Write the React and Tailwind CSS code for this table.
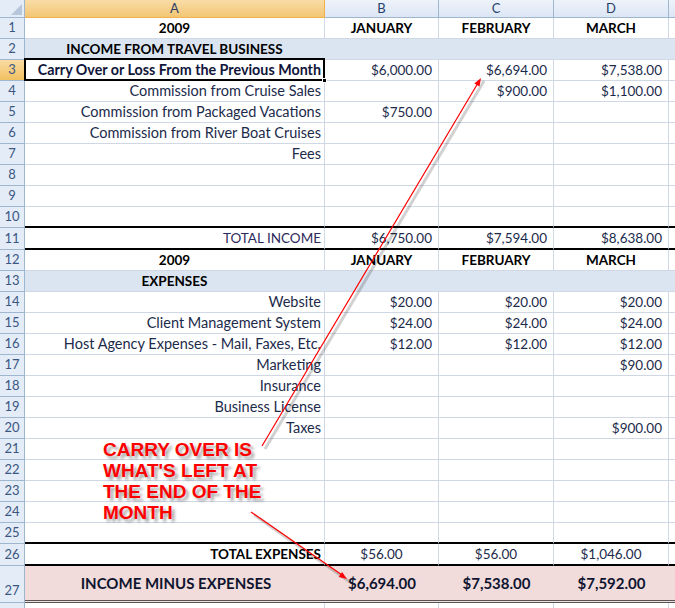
import React from 'react';

const font = { fontFamily: 'Lato, "Open Sans", sans-serif' };

const rows = [
  { n: 1, a: '2009', aCls: 'font-bold justify-center text-black', v: ['JANUARY', 'FEBRUARY', 'MARCH'], vCls: 'font-bold justify-center text-black' },
  { n: 2, a: 'INCOME FROM TRAVEL BUSINESS', aCls: 'font-bold justify-center text-black', bg: 'blue' },
  { n: 3, a: 'Carry Over or Loss From the Previous Month', aCls: 'font-bold justify-end pr-[3px] text-[14.3px] text-[#10153a]', v: ['$6,000.00', '$6,694.00', '$7,538.00'], sel: true },
  { n: 4, a: 'Commission from Cruise Sales', v: ['', '$900.00', '$1,100.00'] },
  { n: 5, a: 'Commission from Packaged Vacations', v: ['$750.00', '', ''] },
  { n: 6, a: 'Commission from River Boat Cruises' },
  { n: 7, a: 'Fees' },
  { n: 8 },
  { n: 9 },
  { n: 10, thick: true },
  { n: 11, a: 'TOTAL INCOME', aCls: 'justify-end pr-[3px] text-[#2d2a5c]', v: ['$6,750.00', '$7,594.00', '$8,638.00'], thick: true, tall: true },
  { n: 12, a: '2009', aCls: 'font-bold justify-center text-black', v: ['JANUARY', 'FEBRUARY', 'MARCH'], vCls: 'font-bold justify-center text-black' },
  { n: 13, a: 'EXPENSES', aCls: 'font-bold justify-center text-black', bg: 'blue' },
  { n: 14, a: 'Website', v: ['$20.00', '$20.00', '$20.00'] },
  { n: 15, a: 'Client Management System', v: ['$24.00', '$24.00', '$24.00'] },
  { n: 16, a: 'Host Agency Expenses - Mail, Faxes, Etc.', v: ['$12.00', '$12.00', '$12.00'] },
  { n: 17, a: 'Marketing', v: ['', '', '$90.00'] },
  { n: 18, a: 'Insurance' },
  { n: 19, a: 'Business License' },
  { n: 20, a: 'Taxes', v: ['', '', '$900.00'] },
  { n: 21 },
  { n: 22 },
  { n: 23 },
  { n: 24 },
  { n: 25, thick: true },
  { n: 26, a: 'TOTAL EXPENSES', aCls: 'font-bold justify-end pr-[3px] text-black', v: ['$56.00', '$56.00', '$1,046.00'], vCls: 'justify-center text-[#1c2b4b]', thick: true, tall: true },
];

const widths = ['w-[300px]', 'w-[114px]', 'w-[115px]', 'w-[115px]'];

function RowHead({ n, sel, h }) {
  return (
    <div
      className={`w-[25px] shrink-0 border-r border-b border-[#9eb6ce] flex justify-center text-[13px] text-[#3a5683] ${h} ${h === 'h-[37px]' ? 'items-end pb-[2px]' : 'items-center'} ${sel ? 'bg-gradient-to-b from-[#f9dba3] to-[#f1c15f]' : 'bg-[#e4ecf7]'}`}
    >
      {n}
    </div>
  );
}

function Row({ r }) {
  const h = r.tall ? 'h-[22px]' : 'h-[21px]';
  const bottom = r.thick ? 'border-b-2 border-b-black' : 'border-b border-b-[#d0d7e5]';
  const fill = r.bg === 'blue' ? 'bg-[#dbe5f1]' : 'bg-white';
  const vline = r.bg === 'blue' ? 'border-r-[#dbe5f1]' : 'border-r-[#d0d7e5]';
  const cells = [r.a || '', ...(r.v || ['', '', ''])];
  return (
    <div className="flex">
      <RowHead n={r.n} sel={r.sel} h={h} />
      {cells.map((t, i) => (
        <div
          key={i}
          className={`${widths[i]} shrink-0 ${h} border-r ${vline} ${bottom} ${fill} flex items-center whitespace-nowrap text-[13.5px] ${
            i === 0 ? r.aCls || 'justify-end pr-[3px] text-[14.5px] text-[#1c2b4b]' : r.vCls || 'justify-end pr-[6px] text-[#1c2b4b]'
          } ${i === 0 && r.sel ? 'relative' : ''}`}
        >
          {t}
          {i === 0 && r.sel && (
            <>
              <div className="absolute -left-[1px] -top-[2px] right-[-1px] bottom-[-1px] border-2 border-black pointer-events-none" />
              <div className="absolute -right-[3px] -bottom-[3px] w-[5px] h-[5px] bg-black border border-white" />
            </>
          )}
        </div>
      ))}
      <div className={`flex-1 ${h} ${bottom} ${fill}`} />
    </div>
  );
}

export default function App() {
  return (
    <div className="relative w-[675px] h-[608px] overflow-hidden bg-white" style={font}>
      {/* column headers */}
      <div className="flex h-[18px]">
        <div className="w-[25px] shrink-0 border-r border-b border-[#9eb6ce] bg-[#e4ecf7] relative">
          <svg className="absolute right-[2px] bottom-[2px]" width="11" height="11">
            <polygon points="11,0 11,11 0,11" fill="#b7c6da" />
          </svg>
        </div>
        {['A', 'B', 'C', 'D'].map((l, i) => (
          <div
            key={l}
            className={`${widths[i]} shrink-0 border-r border-b flex items-center justify-center text-[13px] ${
              i === 0
                ? 'bg-gradient-to-b from-[#f9dca6] to-[#f3c674] border-[#f0b24c] text-[#2b3f66]'
                : 'bg-gradient-to-b from-[#eef3fa] to-[#dce6f4] border-[#9eb6ce] text-[#27416b]'
            }`}
          >
            {l}
          </div>
        ))}
        <div className="flex-1 border-b border-[#9eb6ce] bg-gradient-to-b from-[#eef3fa] to-[#dce6f4]" />
      </div>

      {rows.map((r) => (
        <Row key={r.n} r={r} />
      ))}

      {/* row 27 */}
      <div className="flex">
        <RowHead n={27} h="h-[37px]" />
        {['INCOME MINUS EXPENSES', '$6,694.00', '$7,538.00', '$7,592.00'].map((t, i) => (
          <div
            key={i}
            className={`${widths[i]} shrink-0 h-[37px] border-b-[3px] border-double border-b-[#555] bg-[#f2dcdb] flex items-center justify-center font-bold text-[15px] text-[#0f1530] ${i === 0 ? 'pl-[2px]' : ''}`}
          >
            {t}
          </div>
        ))}
        <div className="flex-1 h-[37px] border-b-[3px] border-double border-b-[#555] bg-[#f2dcdb]" />
      </div>
      <div className="flex">
        <div className="w-[25px] shrink-0 h-[21px] border-r border-[#9eb6ce] bg-[#e4ecf7]" />
        {widths.map((w, i) => (
          <div key={i} className={`${w} shrink-0 h-[21px] border-r border-[#d0d7e5]`} />
        ))}
      </div>

      {/* annotation */}
      <div
        className="absolute left-[103px] top-[439px] text-[19px] leading-[21px] font-bold text-[#ff0000] [text-shadow:3px_3px_3px_rgba(0,0,0,0.35)]"
        style={{ fontFamily: '"Liberation Sans", Arial, sans-serif' }}
      >
        <div>CARRY OVER IS</div>
        <div>WHAT'S LEFT AT</div>
        <div>THE END OF THE</div>
        <div>MONTH</div>
      </div>

      <svg className="absolute inset-0 pointer-events-none" width="675" height="608">
        <g stroke="rgba(0,0,0,0.18)" strokeWidth="3" fill="none">
          <line x1="265" y1="449" x2="484" y2="81" />
          <line x1="254" y1="515" x2="350" y2="582" />
        </g>
        <g stroke="#ff0000" strokeWidth="1.2" fill="#ff0000">
          <line x1="262" y1="446" x2="478" y2="83" />
          <polygon points="481,78 479.5,86.4 474.3,83.4" stroke="none" />
          <line x1="251" y1="512" x2="342" y2="575" />
          <polygon points="347,579 338.7,576.9 342.1,571.9" stroke="none" />
        </g>
      </svg>
    </div>
  );
}
